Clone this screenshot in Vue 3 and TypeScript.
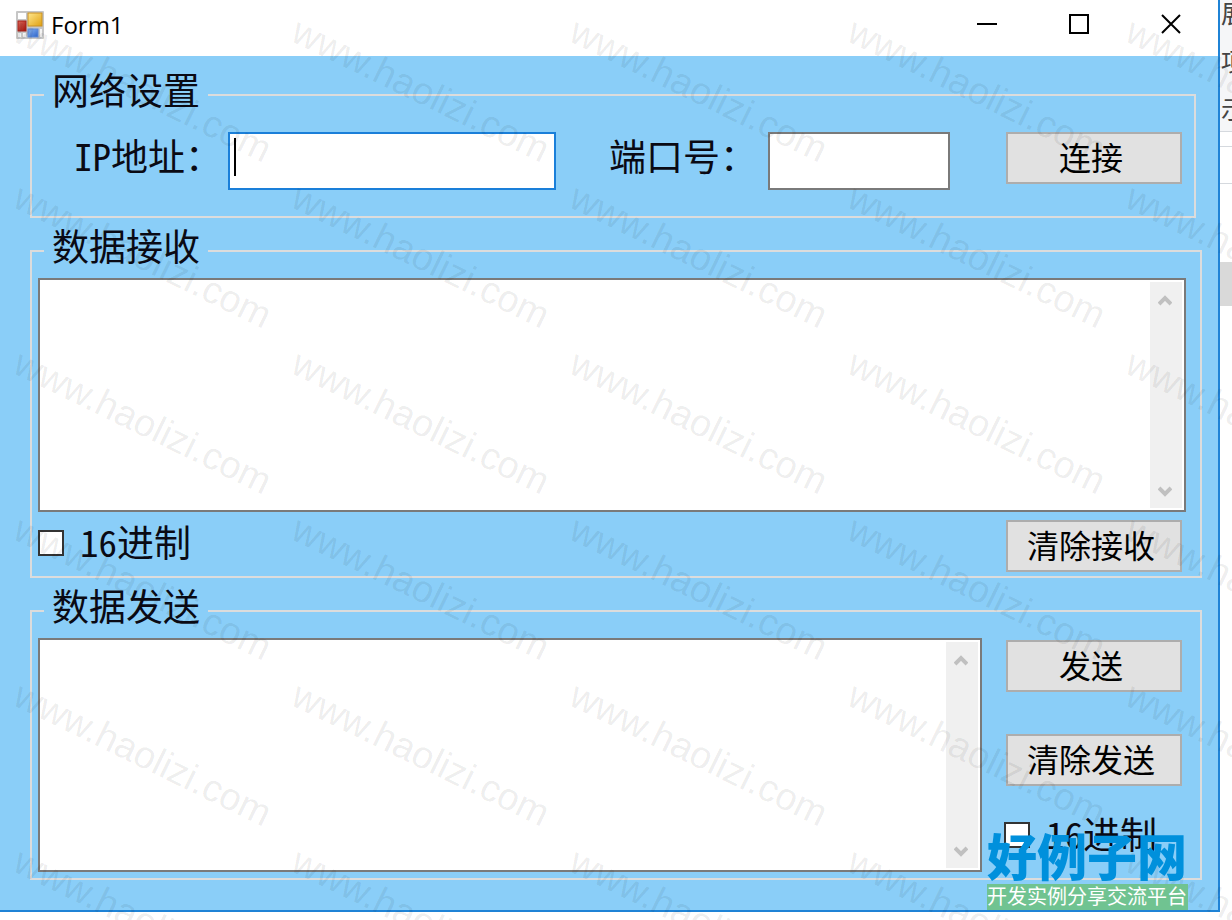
<script setup lang="ts">
import { ref } from 'vue'

const ip = ref('')
const port = ref('')
const received = ref('')
const outgoing = ref('')
const hexReceive = ref(false)
const hexSend = ref(false)

const marks: { x: number; y: number }[] = []
for (let row = 0; row < 6; row++) {
  for (let col = 0; col < 5; col++) {
    marks.push({ x: 11 + col * 278, y: 40 + row * 166 })
  }
}
</script>

<template>
  <div class="desktop">
    <main class="window">
      <header class="titlebar">
        <svg class="app-icon" viewBox="0 0 28 28" aria-hidden="true">
          <defs>
            <linearGradient id="gold" x1="0" y1="0" x2="1" y2="1">
              <stop offset="0" stop-color="#ffe78e" />
              <stop offset="1" stop-color="#e0a010" />
            </linearGradient>
            <linearGradient id="red" x1="0" y1="0" x2="1" y2="1">
              <stop offset="0" stop-color="#df6a5c" />
              <stop offset="1" stop-color="#9c1008" />
            </linearGradient>
            <linearGradient id="blue" x1="0" y1="0" x2="1" y2="1">
              <stop offset="0" stop-color="#8db8f4" />
              <stop offset="1" stop-color="#2b62c8" />
            </linearGradient>
          </defs>
          <rect width="28" height="28" rx="1" fill="#c6c6c6" />
          <rect x="2" y="2" width="8" height="6" fill="#fff" />
          <rect x="2" y="22" width="3" height="4" fill="#f4f4f4" />
          <rect x="7" y="22" width="3" height="4" fill="#f4f4f4" />
          <rect x="24" y="18" width="2" height="8" fill="#f4f4f4" />
          <rect x="2" y="10" width="8" height="10" fill="url(#red)" stroke="#a52019" />
          <rect x="12" y="2" width="14" height="13" fill="url(#gold)" stroke="#c99022" />
          <rect x="12" y="18" width="10" height="8" fill="url(#blue)" stroke="#5c88d6" />
        </svg>
        <h1>Form1</h1>
        <button class="caption" type="button" aria-label="最小化">
          <svg viewBox="0 0 20 20"><path d="M0 10H20" /></svg>
        </button>
        <button class="caption" type="button" aria-label="最大化">
          <svg viewBox="0 0 20 20"><path d="M1 1H19V19H1Z" /></svg>
        </button>
        <button class="caption" type="button" aria-label="关闭">
          <svg viewBox="0 0 20 20"><path d="M1 1L19 19M19 1L1 19" /></svg>
        </button>
      </header>

      <form class="body" @submit.prevent>
        <fieldset class="network">
          <legend>网络设置</legend>
          <div class="network-row">
            <label class="ip-label" for="ip">IP地址：</label>
            <div class="ip-box">
              <input id="ip" v-model="ip" class="field active" type="text" />
              <span v-if="!ip" class="caret"></span>
            </div>
            <label class="port-label" for="port">端口号：</label>
            <div class="port-box">
              <input id="port" v-model="port" class="field" type="text" />
            </div>
            <button class="btn" type="button">连接</button>
          </div>
        </fieldset>

        <fieldset>
          <legend>数据接收</legend>
          <div class="memo">
            <textarea v-model="received" aria-label="数据接收"></textarea>
            <div class="scrollbar" aria-hidden="true">
              <svg viewBox="0 0 14 12"><path d="M1 10L7 4L13 10" /></svg>
              <svg viewBox="0 0 14 12"><path d="M1 2L7 8L13 2" /></svg>
            </div>
          </div>
          <div class="receive-tools">
            <label class="check"><input v-model="hexReceive" type="checkbox" /><span>16进制</span></label>
            <button class="btn" type="button" @click="received = ''">清除接收</button>
          </div>
        </fieldset>

        <fieldset>
          <legend>数据发送</legend>
          <div class="send-row">
            <div class="memo">
              <textarea v-model="outgoing" aria-label="数据发送"></textarea>
              <div class="scrollbar" aria-hidden="true">
                <svg viewBox="0 0 14 12"><path d="M1 10L7 4L13 10" /></svg>
                <svg viewBox="0 0 14 12"><path d="M1 2L7 8L13 2" /></svg>
              </div>
            </div>
            <div class="send-tools">
              <button class="btn" type="button">发送</button>
              <button class="btn" type="button" @click="outgoing = ''">清除发送</button>
              <label class="check"><input v-model="hexSend" type="checkbox" /><span>16进制</span></label>
            </div>
          </div>
        </fieldset>
      </form>
    </main>

    <aside class="behind">
      <div class="behind-tabs">
        <span>展</span>
        <span>项</span>
        <span>示</span>
      </div>
      <div class="behind-line"></div>
      <div class="behind-box"></div>
      <div class="behind-thumb"></div>
    </aside>

    <svg class="watermark" aria-hidden="true">
      <text v-for="m in marks" :key="`${m.x}-${m.y}`" :transform="`translate(${m.x} ${m.y}) rotate(26)`">www.haolizi.com</text>
    </svg>

    <div class="brand">
      <strong>好例子网</strong>
      <span>开发实例分享交流平台</span>
    </div>
  </div>
</template>

<style>
body {
  margin: 0;
  background: #fff;
}
</style>

<style scoped>
.desktop {
  position: relative;
  display: grid;
  grid-template-columns: minmax(0, 1fr) 12px;
  align-items: start;
  padding-bottom: 8px;
  overflow: hidden;
  font-family: "Noto Sans Mono CJK SC", "Noto Sans CJK SC", sans-serif;
  font-weight: 300;
  color: #0a0a14;
}
.window {
  border-right: 2px solid #1f83d6;
  border-bottom: 2px solid #1f83d6;
  background: #8acef8;
}
.titlebar {
  display: flex;
  align-items: center;
  height: 56px;
  padding: 0 1px 0 16px;
  box-sizing: border-box;
  background: #fff;
}
.app-icon {
  width: 28px;
  height: 28px;
  margin-bottom: 6px;
}
h1 {
  flex: 1;
  margin: 0 0 6px 7px;
  font: 400 24px/32px "Open Sans", "Noto Sans", sans-serif;
  color: #000;
}
.caption {
  width: 92px;
  height: 48px;
  margin-bottom: 8px;
  padding: 0;
  border: 0;
  background: none;
}
.caption svg {
  display: block;
  width: 20px;
  height: 20px;
  margin: auto;
  fill: none;
  stroke: #000;
  stroke-width: 2;
}
.body {
  display: flex;
  flex-direction: column;
  gap: 13px;
  padding: 19px 16px 30px 30px;
}
fieldset {
  min-width: 0;
  margin: 0;
  padding: 7px 14px 6px 6px;
  border: 2px solid #dcdcdc;
}
legend {
  margin-left: 6px;
  padding: 0 8px 12px;
  font-size: 37px;
  line-height: 28px;
}
.network {
  margin-right: 6px;
  padding: 17px 12px 26px 6px;
}
.network-row {
  display: flex;
  align-items: flex-start;
}
.network-row label {
  box-sizing: border-box;
  font-size: 37px;
  line-height: 46px;
  white-space: nowrap;
}
.ip-label {
  width: 190px;
  padding-left: 36px;
}
.port-label {
  width: 159px;
  margin-left: 53px;
}
.ip-box {
  position: relative;
  flex: 328 1 0;
}
.port-box {
  flex: 182 1 0;
  margin-right: 56px;
}
.field {
  display: block;
  width: 100%;
  height: 58px;
  padding: 4px;
  box-sizing: border-box;
  border: 2px solid #7a7a7a;
  border-radius: 0;
  outline: 0;
  background: #fff;
  font: inherit;
  font-size: 37px;
}
.field.active {
  border-color: #1a7fd9;
}
.caret {
  position: absolute;
  left: 6px;
  top: 6px;
  width: 2px;
  height: 38px;
  background: #000;
}
.btn {
  width: 176px;
  height: 52px;
  padding: 0 6px 4px 0;
  border: 2px solid #adadad;
  border-radius: 0;
  background: #e1e1e1;
  color: #000;
  font: inherit;
  font-size: 32px;
  line-height: 44px;
  white-space: nowrap;
}
.memo {
  display: flex;
  height: 234px;
  padding: 2px;
  box-sizing: border-box;
  border: 2px solid #7a7a7a;
  background: #fff;
}
textarea {
  flex: 1;
  min-width: 0;
  padding: 4px;
  border: 0;
  outline: 0;
  resize: none;
  overflow: hidden;
  background: none;
  font: inherit;
  font-size: 37px;
}
.scrollbar {
  display: flex;
  flex-direction: column;
  justify-content: space-between;
  align-items: center;
  width: 32px;
  padding: 12px 2px 10px 0;
  box-sizing: border-box;
  background: #f0f0f0;
}
.scrollbar svg {
  width: 14px;
  height: 12px;
  fill: none;
  stroke: #c0c0c0;
  stroke-width: 4;
}
.receive-tools {
  display: flex;
  justify-content: space-between;
  align-items: flex-start;
  padding: 8px 4px 0 0;
  margin-bottom: -2px;
}
.check {
  display: flex;
  align-items: center;
  gap: 16px;
  font-size: 37px;
  line-height: 42px;
  white-space: nowrap;
}
.check span {
  padding-bottom: 4px;
}
.check input {
  appearance: none;
  width: 26px;
  height: 26px;
  margin: 0;
  border: 2px solid #333;
  background: #fff;
}
.check input:checked {
  background: #333;
  box-shadow: inset 0 0 0 4px #fff;
}
.send-row {
  display: grid;
  grid-template-columns: minmax(0, 1fr) 178px;
  gap: 22px;
  padding-right: 4px;
}
.send-tools {
  display: flex;
  flex-direction: column;
  gap: 42px;
  padding-top: 2px;
}
.send-tools .btn {
  align-self: flex-end;
}
.send-tools .check {
  margin-top: -16px;
}
.behind {
  overflow: hidden;
  background: #fff;
}
.behind-tabs {
  height: 131px;
  background: #f5f6f8;
  border-bottom: 1px solid #d5d9de;
  color: #444;
  font-size: 25px;
  font-weight: 400;
}
.behind-tabs span {
  display: block;
  height: 48px;
  padding-left: 1px;
  line-height: 24px;
}
.behind-line {
  height: 14px;
  border-bottom: 1px solid #d5d9de;
}
.behind-box {
  height: 36px;
  border-bottom: 1px solid #d5d9de;
}
.behind-thumb {
  height: 44px;
  margin-top: 78px;
  background: #d9d9d9;
}
.brand {
  position: absolute;
  right: 44px;
  bottom: 10px;
  width: 201px;
  pointer-events: none;
  font-family: "Noto Sans CJK SC", sans-serif;
  white-space: nowrap;
}
.brand strong {
  display: block;
  padding-bottom: 6px;
  font-size: 50px;
  line-height: 48px;
  font-weight: 900;
  color: #0090dc;
}
.brand span {
  display: block;
  padding-bottom: 2px;
  background: #70c391;
  color: #fff;
  font-size: 20px;
  line-height: 24px;
  font-weight: 400;
}
.watermark {
  position: absolute;
  inset: 0;
  width: 100%;
  height: 100%;
  pointer-events: none;
  fill: #000;
  fill-opacity: 0.08;
  font: 400 38px "Liberation Sans", Arial, sans-serif;
}
</style>
